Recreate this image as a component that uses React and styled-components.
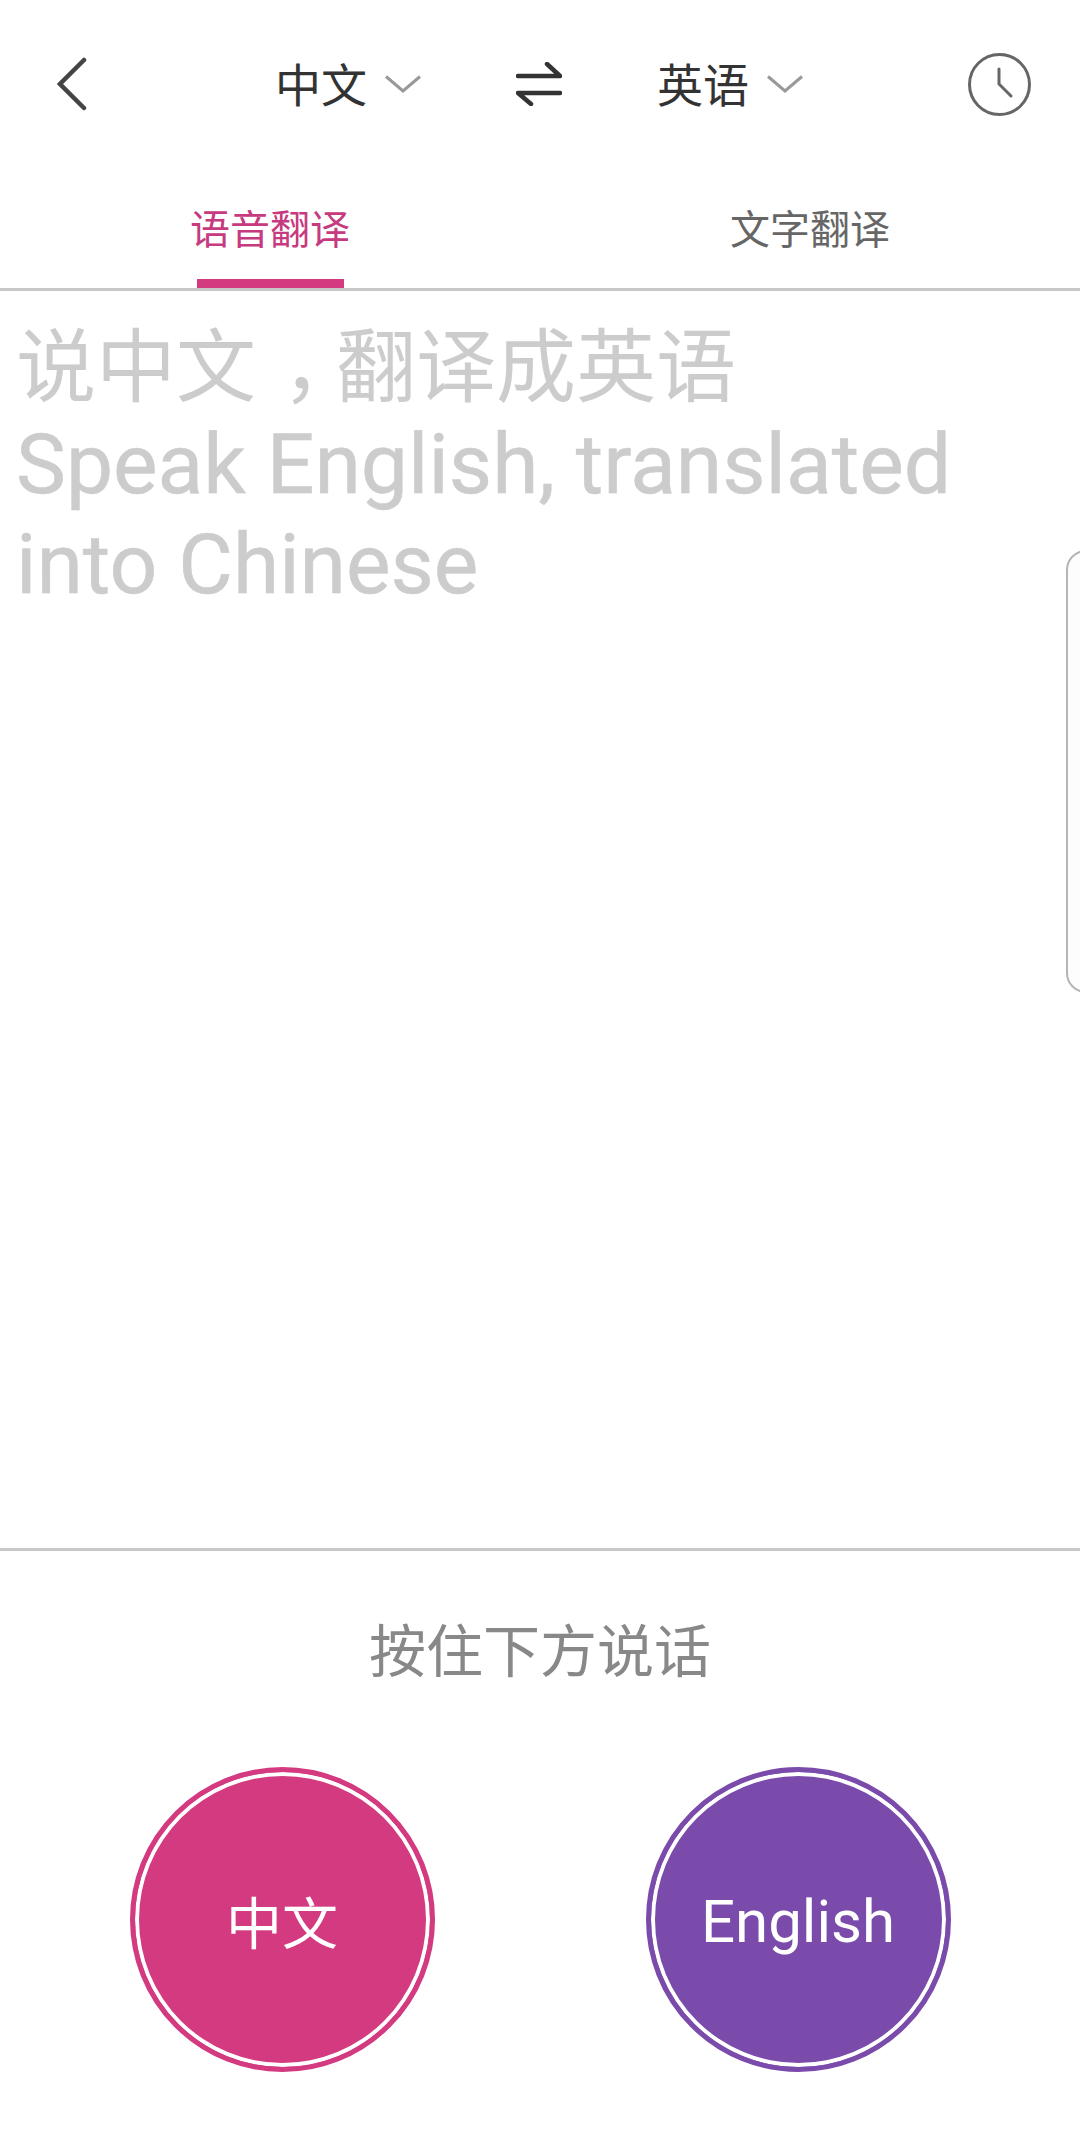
import styled, { createGlobalStyle } from 'styled-components'

const sans = `Roboto, "Noto Sans CJK SC", sans-serif`

const GlobalStyle = createGlobalStyle`
	html, body {
		margin: 0;
		padding: 0;
		background: #fff;
	}
`

const Page = styled.div`
	position: relative;
	display: flex;
	flex-direction: column;
	width: 1080px;
	height: 2148px;
	overflow: hidden;
	background: #fff;
	font-family: ${sans};
`

const TopBar = styled.header`
	display: flex;
	align-items: center;
	height: 168px;
	flex: none;
`

const IconSlot = styled.div`
	display: flex;
	align-items: center;
	flex: none;
	width: 200px;
	padding-left: ${props => props.$left}px;
	box-sizing: border-box;
`

const Languages = styled.div`
	flex: 1;
	display: flex;
	align-items: center;
	justify-content: center;
	gap: 95px;
	padding-right: 2px;
`

const LanguagePick = styled.div`
	display: flex;
	align-items: center;
	gap: 18px;
	font-size: 46px;
	line-height: 1;
	color: #333;
`

const PickLabel = styled.span`
	padding-top: 3px;
`

const Tabs = styled.nav`
	display: grid;
	grid-template-columns: 1fr 1fr;
	box-sizing: border-box;
	height: 123px;
	flex: none;
	border-bottom: 3px solid #c8c8c8;
`

const Tab = styled.div`
	display: flex;
	flex-direction: column;
	align-items: center;
	justify-content: flex-end;
	font-size: 40px;
	color: ${props => (props.$active ? '#c63a80' : '#666')};
`

const TabLabel = styled.span`
	line-height: 50px;
	margin-bottom: 23px;
`

const TabMark = styled.span`
	width: 147px;
	height: 9px;
	background: ${props => (props.$active ? '#d33a7f' : 'transparent')};
`

const Prompt = styled.main`
	flex: none;
	box-sizing: border-box;
	height: 1260px;
	padding: 24px 16px 0;
	border-bottom: 3px solid #c8c8c8;
	color: #ccc;
`

const PromptTitle = styled.div`
	box-sizing: border-box;
	height: 100px;
	padding-top: 7px;
	font-size: 80px;
	line-height: 92px;
`

const PromptLine = styled.div`
	height: 100px;
	font-size: 84px;
	line-height: 100px;
	-webkit-text-stroke: 0.5px #ccc;
`

const CenteredComma = styled.span`
	padding-left: 26px;
	letter-spacing: -26px;
`

const Hint = styled.p`
	margin: 0;
	padding-top: 64px;
	text-align: center;
	font-size: 57px;
	line-height: 76px;
	color: #888;
`

const Buttons = styled.div`
	display: flex;
	justify-content: center;
	gap: 211px;
	margin-top: 76px;
`

const TalkButton = styled.button`
	width: 305px;
	height: 305px;
	padding: ${props => props.$drop || 0}px 0 0;
	border: 5px solid ${props => props.$color};
	border-radius: 50%;
	background: ${props => props.$color};
	color: #fff;
	font-family: inherit;
	font-size: ${props => props.$size}px;
	box-shadow: inset 0 0 0 4px #fff;
`

const SideHandle = styled.div`
	position: absolute;
	top: 550px;
	left: 1066px;
	width: 40px;
	height: 443px;
	box-sizing: border-box;
	border: 2px solid #b5b5b5;
	border-radius: 20px;
	background: #fdfdfd;
`

const Chevron = () => (
	<svg width="36" height="18" viewBox="0 0 36 18" fill="none" stroke="#999" strokeWidth="3">
		<path d="M1 1.5L18 16L35 1.5" />
	</svg>
)

export default function App() {
	return (
		<Page>
			<GlobalStyle />
			<TopBar>
				<IconSlot $left={57}>
					<svg width="30" height="54" viewBox="0 0 30 54" fill="none" stroke="#444" strokeWidth="4.5" strokeLinecap="round">
						<path d="M27 3L3 27L27 51" />
					</svg>
				</IconSlot>
				<Languages>
					<LanguagePick>
						<PickLabel>中文</PickLabel>
						<Chevron />
					</LanguagePick>
					<svg width="46" height="44" viewBox="0 0 46 44" fill="none" stroke="#333" strokeWidth="4.5" strokeLinecap="round" strokeLinejoin="round">
						<path d="M2 14H44L31 2" />
						<path d="M44 31H2L15 42" />
					</svg>
					<LanguagePick>
						<PickLabel>英语</PickLabel>
						<Chevron />
					</LanguagePick>
				</Languages>
				<IconSlot $left={88}>
					<svg width="63" height="63" viewBox="0 0 63 63" fill="none" stroke="#666" strokeWidth="3" strokeLinecap="round">
						<circle cx="31.5" cy="31.5" r="30" />
						<path d="M31 16V31L43 43" />
					</svg>
				</IconSlot>
			</TopBar>
			<Tabs>
				<Tab $active>
					<TabLabel>语音翻译</TabLabel>
					<TabMark $active />
				</Tab>
				<Tab>
					<TabLabel>文字翻译</TabLabel>
					<TabMark />
				</Tab>
			</Tabs>
			<Prompt>
				<PromptTitle>
					说中文<CenteredComma>，</CenteredComma>翻译成英语
				</PromptTitle>
				<PromptLine>Speak English, translated</PromptLine>
				<PromptLine>into Chinese</PromptLine>
			</Prompt>
			<Hint>按住下方说话</Hint>
			<Buttons>
				<TalkButton $color="#d33a7f" $size={56}>中文</TalkButton>
				<TalkButton $color="#7b4bab" $size={60} $drop={4}>English</TalkButton>
			</Buttons>
			<SideHandle />
		</Page>
	)
}
